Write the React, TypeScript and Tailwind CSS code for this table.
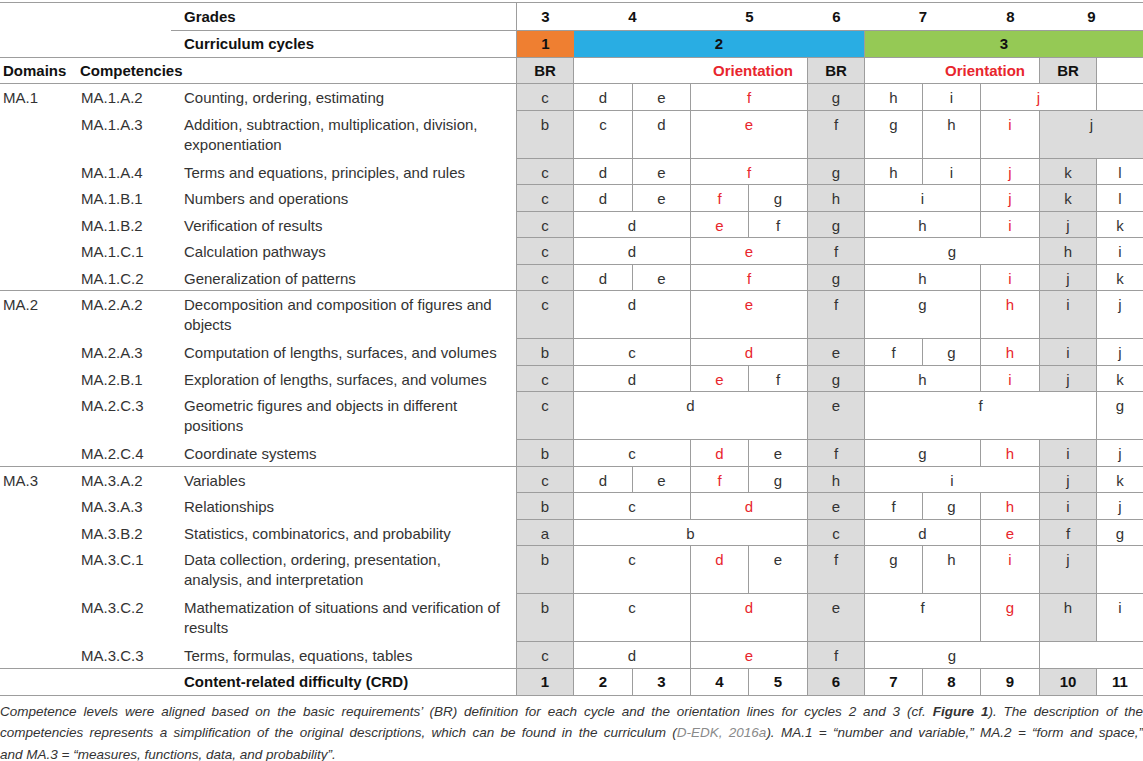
import React from 'react';

type Cell = [string, number?, string?];

interface Row {
  domain?: string;
  code: string;
  text: string;
  tall?: boolean;
  last?: boolean;
  cells: Cell[];
}

const rows: Row[] = [
  { domain: 'MA.1', code: 'MA.1.A.2', text: 'Counting, ordering, estimating', cells: [['c'], ['d'], ['e'], ['f', 2, 'r'], ['g'], ['h'], ['i'], ['j', 2, 'r'], ['']] },
  { code: 'MA.1.A.3', text: 'Addition, subtraction, multiplication, division,\nexponentiation', tall: true, cells: [['b'], ['c'], ['d'], ['e', 2, 'r'], ['f'], ['g'], ['h'], ['i', 1, 'r'], ['j', 2, 'g']] },
  { code: 'MA.1.A.4', text: 'Terms and equations, principles, and rules', cells: [['c'], ['d'], ['e'], ['f', 2, 'r'], ['g'], ['h'], ['i'], ['j', 1, 'r'], ['k'], ['l']] },
  { code: 'MA.1.B.1', text: 'Numbers and operations', cells: [['c'], ['d'], ['e'], ['f', 1, 'r'], ['g'], ['h'], ['i', 2], ['j', 1, 'r'], ['k'], ['l']] },
  { code: 'MA.1.B.2', text: 'Verification of results', cells: [['c'], ['d', 2], ['e', 1, 'r'], ['f'], ['g'], ['h', 2], ['i', 1, 'r'], ['j'], ['k']] },
  { code: 'MA.1.C.1', text: 'Calculation pathways', cells: [['c'], ['d', 2], ['e', 2, 'r'], ['f'], ['g', 3], ['h'], ['i']] },
  { code: 'MA.1.C.2', text: 'Generalization of patterns', last: true, cells: [['c'], ['d'], ['e'], ['f', 2, 'r'], ['g'], ['h', 2], ['i', 1, 'r'], ['j'], ['k']] },
  { domain: 'MA.2', code: 'MA.2.A.2', text: 'Decomposition and composition of figures and\nobjects', tall: true, cells: [['c'], ['d', 2], ['e', 2, 'r'], ['f'], ['g', 2], ['h', 1, 'r'], ['i'], ['j']] },
  { code: 'MA.2.A.3', text: 'Computation of lengths, surfaces, and volumes', cells: [['b'], ['c', 2], ['d', 2, 'r'], ['e'], ['f'], ['g'], ['h', 1, 'r'], ['i'], ['j']] },
  { code: 'MA.2.B.1', text: 'Exploration of lengths, surfaces, and volumes', cells: [['c'], ['d', 2], ['e', 1, 'r'], ['f'], ['g'], ['h', 2], ['i', 1, 'r'], ['j'], ['k']] },
  { code: 'MA.2.C.3', text: 'Geometric figures and objects in different\npositions', tall: true, cells: [['c'], ['d', 4], ['e'], ['f', 4], ['g']] },
  { code: 'MA.2.C.4', text: 'Coordinate systems', last: true, cells: [['b'], ['c', 2], ['d', 1, 'r'], ['e'], ['f'], ['g', 2], ['h', 1, 'r'], ['i'], ['j']] },
  { domain: 'MA.3', code: 'MA.3.A.2', text: 'Variables', cells: [['c'], ['d'], ['e'], ['f', 1, 'r'], ['g'], ['h'], ['i', 3], ['j'], ['k']] },
  { code: 'MA.3.A.3', text: 'Relationships', cells: [['b'], ['c', 2], ['d', 2, 'r'], ['e'], ['f'], ['g'], ['h', 1, 'r'], ['i'], ['j']] },
  { code: 'MA.3.B.2', text: 'Statistics, combinatorics, and probability', cells: [['a'], ['b', 4], ['c'], ['d', 2], ['e', 1, 'r'], ['f'], ['g']] },
  { code: 'MA.3.C.1', text: 'Data collection, ordering, presentation,\nanalysis, and interpretation', tall: true, cells: [['b'], ['c', 2], ['d', 1, 'r'], ['e'], ['f'], ['g'], ['h'], ['i', 1, 'r'], ['j'], ['']] },
  { code: 'MA.3.C.2', text: 'Mathematization of situations and verification of\nresults', tall: true, cells: [['b'], ['c', 2], ['d', 2, 'r'], ['e'], ['f', 2], ['g', 1, 'r'], ['h'], ['i']] },
  { code: 'MA.3.C.3', text: 'Terms, formulas, equations, tables', last: true, cells: [['c'], ['d', 2], ['e', 2, 'r'], ['f'], ['g', 3], ['', 2]] },
];

const widths = ['w-[77px]', 'w-[94px]', 'w-[346px]', 'w-[57px]', 'w-[59px]', 'w-[58px]', 'w-[58px]', 'w-[59px]', 'w-[57px]', 'w-[58px]', 'w-[58px]', 'w-[59px]', 'w-[57px]', 'w-[46px]'];

const isBR = (c: number) => c === 1 || c === 6 || c === 10;

function GradeCells({ cells }: { cells: Cell[] }) {
  let col = 1;
  return (
    <>
      {cells.map(([t, span = 1, f = ''], i) => {
        const start = col;
        col += span;
        const gray = f.includes('g') || (span === 1 && isBR(start));
        const end = start + span - 1 === 11;
        return (
          <td
            key={i}
            colSpan={span}
            className={`border-b ${end ? '' : 'border-r'} border-[#9d9d9d] align-top text-center pt-[4px] ${gray ? 'bg-[#dcdcdc]' : 'bg-white'} ${f.includes('r') ? 'text-[#e8262d]' : 'text-[#333]'}`}
          >
            {t}
          </td>
        );
      })}
    </>
  );
}

export default function App() {
  const line = 'border-[#9d9d9d]';
  return (
    <div className="w-[1143px] bg-white font-['Liberation_Sans',Arial,sans-serif] text-[15px] leading-[20px] text-[#333]">
      <table className="mt-[2px] w-[1143px] table-fixed border-separate border-spacing-0">
        <colgroup>
          {widths.map((w, i) => (
            <col key={i} className={w} />
          ))}
        </colgroup>
        <tbody>
          {/* Grades */}
          <tr className="h-[29px] font-bold text-[#111]">
            <td colSpan={2} className={`border-t ${line}`}></td>
            <td className={`border-t border-b border-r ${line} pl-[13px] align-middle`}>Grades</td>
            <td className={`border-t border-b ${line} text-center`}>3</td>
            <td colSpan={2} className={`border-t border-b ${line} text-center`}>4</td>
            <td colSpan={2} className={`border-t border-b ${line} text-center`}>5</td>
            <td className={`border-t border-b ${line} text-center`}>6</td>
            <td colSpan={2} className={`border-t border-b ${line} text-center`}>7</td>
            <td className={`border-t border-b ${line} text-center`}>8</td>
            <td colSpan={2} className={`border-t border-b ${line} text-center`}>9</td>
          </tr>
          {/* Curriculum cycles */}
          <tr className="h-[27px] font-bold text-[#111]">
            <td colSpan={2} className={`border-b ${line}`}></td>
            <td className={`border-b border-r ${line} pl-[13px]`}>Curriculum cycles</td>
            <td className={`border-b ${line} bg-[#ef7f31] text-center`}>1</td>
            <td colSpan={5} className={`border-b border-r ${line} bg-[#29ade3] text-center`}>2</td>
            <td colSpan={5} className={`border-b ${line} bg-[#95c955] text-center`}>3</td>
          </tr>
          {/* Domains / Competencies */}
          <tr className="h-[26px] font-bold text-[#111]">
            <td className={`border-b ${line} pl-[3px]`}>Domains</td>
            <td colSpan={2} className={`border-b border-r ${line} pl-[3px]`}>Competencies</td>
            <td className={`border-b border-r ${line} bg-[#dcdcdc] text-center`}>BR</td>
            <td colSpan={4} className={`border-b border-r ${line} text-right pr-[14px] text-[#e8262d]`}>Orientation</td>
            <td className={`border-b border-r ${line} bg-[#dcdcdc] text-center`}>BR</td>
            <td colSpan={3} className={`border-b border-r ${line} text-right pr-[14px] text-[#e8262d]`}>Orientation</td>
            <td className={`border-b border-r ${line} bg-[#dcdcdc] text-center`}>BR</td>
            <td className={`border-b ${line}`}></td>
          </tr>
          {rows.map((r) => (
            <tr key={r.code} className={r.tall ? 'h-[48px]' : 'h-[26.5px]'}>
              <td className={`${r.last ? 'border-b' : ''} ${line} align-top pt-[4px] pl-[3px]`}>{r.domain ?? ''}</td>
              <td className={`${r.last ? 'border-b' : ''} ${line} align-top pt-[4px] pl-[4px]`}>{r.code}</td>
              <td className={`${r.last ? 'border-b' : ''} border-r ${line} align-top pt-[4px] pl-[13px] whitespace-pre-line`}>{r.text}</td>
              <GradeCells cells={r.cells} />
            </tr>
          ))}
          {/* CRD */}
          <tr className="h-[27px] font-bold text-[#111]">
            <td colSpan={2} className={`border-b ${line}`}></td>
            <td className={`border-b border-r ${line} pl-[13px]`}>Content-related difficulty (CRD)</td>
            {[1, 2, 3, 4, 5, 6, 7, 8, 9, 10, 11].map((n) => (
              <td
                key={n}
                className={`border-b ${n === 11 ? '' : 'border-r'} ${line} text-center ${isBR(n) ? 'bg-[#dcdcdc]' : 'bg-white'}`}
              >
                {n}
              </td>
            ))}
          </tr>
        </tbody>
      </table>

      {/* Caption */}
      <div className="mt-[5px] text-[13.5px] leading-[21.5px] italic text-[#333]">
        <p className="text-justify [text-align-last:justify] whitespace-nowrap">
          Competence levels were aligned based on the basic requirements’ (BR) definition for each cycle and the orientation lines for cycles 2 and 3 (cf. <b>Figure 1</b>). The description of the
        </p>
        <p className="text-justify [text-align-last:justify] whitespace-nowrap">
          competencies represents a simplification of the original descriptions, which can be found in the curriculum (<span className="text-[#8a8a8a]">D-EDK, 2016a</span>). MA.1 = “number and variable,” MA.2 = “form and space,”
        </p>
        <p>and MA.3 = “measures, functions, data, and probability”.</p>
      </div>
    </div>
  );
}
